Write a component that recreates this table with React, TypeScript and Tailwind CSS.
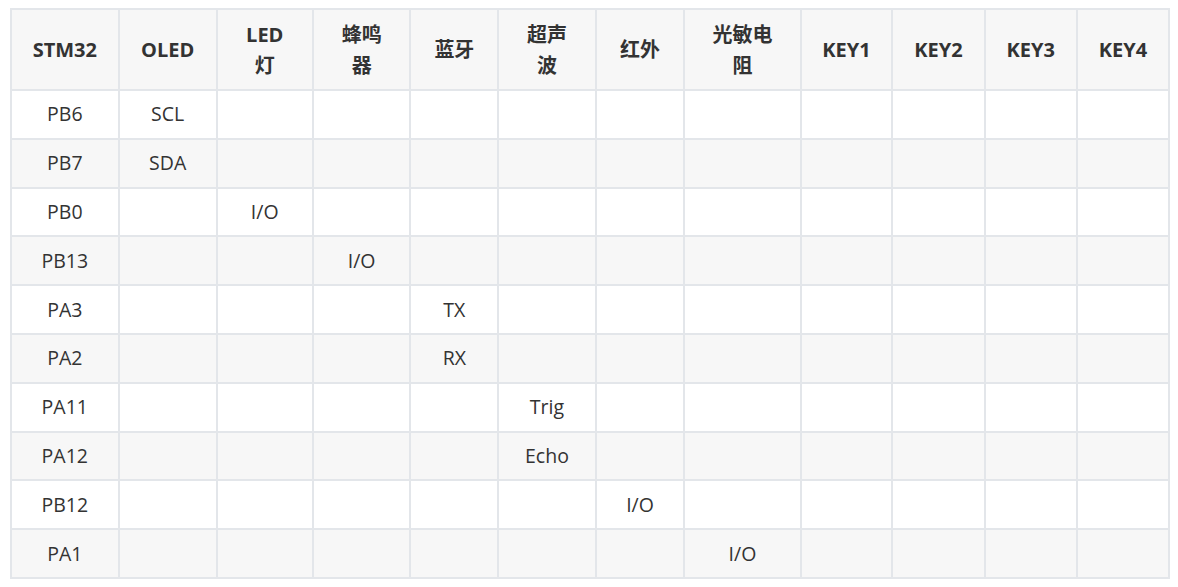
import React from "react";

const headers: React.ReactNode[] = [
  "STM32",
  "OLED",
  <>LED<br />灯</>,
  <>蜂鸣<br />器</>,
  "蓝牙",
  <>超声<br />波</>,
  "红外",
  <>光敏电<br />阻</>,
  "KEY1",
  "KEY2",
  "KEY3",
  "KEY4",
];

const widths = [107.5, 98, 96, 97.6, 87.7, 97.3, 88.7, 116, 91.7, 92.3, 92, 92];

const rows: [string, number, string][] = [
  ["PB6", 1, "SCL"],
  ["PB7", 1, "SDA"],
  ["PB0", 2, "I/O"],
  ["PB13", 3, "I/O"],
  ["PA3", 4, "TX"],
  ["PA2", 4, "RX"],
  ["PA11", 5, "Trig"],
  ["PA12", 5, "Echo"],
  ["PB12", 6, "I/O"],
  ["PA1", 7, "I/O"],
];

export default function App() {
  return (
    <div
      className="w-[1178px] h-[587px] bg-white pt-[8px] pl-[10px] text-[#333333]"
      style={{ fontFamily: '"Open Sans", "Noto Sans CJK SC", sans-serif' }}
    >
      <table className="table-fixed border-collapse border-2 border-[#e3e6ea] w-[1160px]">
        <colgroup>
          {widths.map((w, i) => (
            <col key={i} style={{ width: w }} />
          ))}
        </colgroup>
        <thead>
          <tr className="h-[81px] bg-[#f7f7f7]">
            {headers.map((h, i) => (
              <th
                key={i}
                className="border-2 border-[#e3e6ea] text-center align-middle font-bold text-[20px] leading-[31px] px-1"
              >
                {h}
              </th>
            ))}
          </tr>
        </thead>
        <tbody>
          {rows.map(([pin, col, val], r) => (
            <tr
              key={pin}
              className={`h-[48.8px] ${r % 2 === 1 ? "bg-[#f7f7f7]" : "bg-white"}`}
            >
              {widths.map((_, c) => (
                <td
                  key={c}
                  className="border-2 border-[#e3e6ea] text-center align-middle text-[19.5px] leading-[24px] px-1"
                >
                  {c === 0 ? pin : c === col ? val : ""}
                </td>
              ))}
            </tr>
          ))}
        </tbody>
      </table>
    </div>
  );
}
